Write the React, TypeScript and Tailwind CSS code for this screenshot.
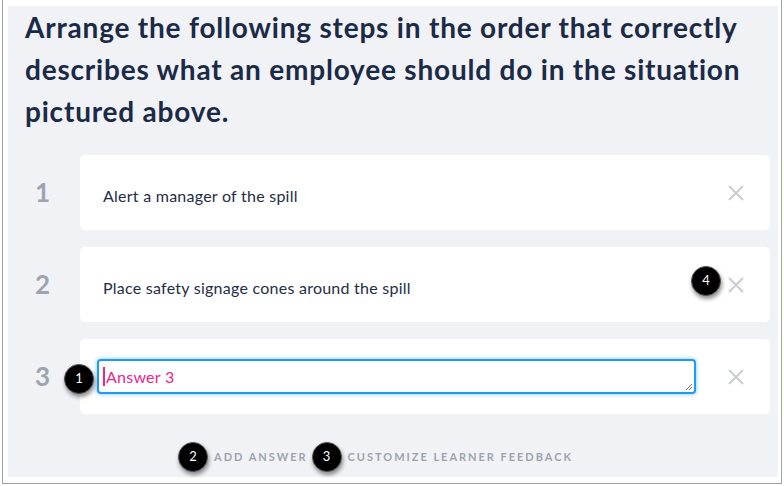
const steps = [
  { n: 1, text: 'Alert a manager of the spill' },
  { n: 2, text: 'Place safety signage cones around the spill' },
];

function Badge({ n, className }: { n: number; className: string }) {
  return (
    <div
      className={`absolute w-[30px] h-[30px] rounded-full bg-black border border-[#555] text-white text-[13px] tracking-normal font-normal flex items-center justify-center shadow-[1px_3px_4px_rgba(0,0,0,0.45)] ${className}`}
    >
      {n}
    </div>
  );
}

function Close() {
  return (
    <svg width="16" height="16" viewBox="0 0 16 16" className="shrink-0">
      <path d="M1 1 L15 15 M15 1 L1 15" stroke="#c9cdd3" strokeWidth="2" />
    </svg>
  );
}

export default function App() {
  return (
    <div className="w-[784px] h-[486px] bg-white font-['Lato',sans-serif]">
      <div className="ml-[2px] w-[780px] h-[484px] border-l border-r border-b border-[#a3a3a3] pt-[6px] pl-[5px] pr-[3px] pb-[6px]">
        <div className="h-full bg-[#f0f2f6] pl-[17px] pr-[8px]">
          <h1 className="text-[28px] leading-[42px] font-bold tracking-[0.8px] text-[#1b2a47] pr-[4px]">
            Arrange the following steps in the order that correctly describes what an employee should do in the situation pictured above.
          </h1>

          <div className="mt-[23px] flex flex-col gap-[17px]">
            {steps.map((s) => (
              <div key={s.n} className="flex items-center">
                <div className="w-[55px] pl-[10px] text-[26px] font-bold text-[#9ca4af]">{s.n}</div>
                <div className="relative flex-1 h-[75px] bg-white rounded-[5px] flex items-center pl-[23px] pr-[26px]">
                  <span className="flex-1 pt-[7px] text-[16px] tracking-[0.25px] text-[#1f2d48]">{s.text}</span>
                  <Close />
                  {s.n === 2 && <Badge n={4} className="left-[611px] top-[19px]" />}
                </div>
              </div>
            ))}

            <div className="flex items-center">
              <div className="w-[55px] pl-[10px] text-[26px] font-bold text-[#9ca4af]">3</div>
              <div className="relative flex-1 h-[75px] bg-white rounded-[5px] flex items-center pl-[17px] pr-[26px]">
                <div className="relative flex-1 h-[35px] mr-[32px] border-2 border-[#1e9bf3] rounded-[4px] bg-white shadow-[0_0_4px_rgba(30,155,243,0.6)] flex items-center pl-[4px]">
                  <span className="w-[2px] h-[19px] bg-[#ec2490] mr-[1px]" />
                  <span className="text-[16px] tracking-[0.25px] text-[#ec2490]">Answer 3</span>
                  <svg className="absolute right-[2px] bottom-[2px]" width="7" height="7" viewBox="0 0 7 7">
                    <path d="M1 7 L7 1 M4 7 L7 4" stroke="#777" strokeWidth="1" />
                  </svg>
                </div>
                <Close />
                <Badge n={1} className="left-[-16px] top-[25px]" />
              </div>
            </div>
          </div>

          <div className="mt-[35px] pr-[8px] flex justify-center gap-[40px] text-[11px] font-bold tracking-[0.18em] text-[#9ca4af]">
            <span className="relative">
              ADD ANSWER
              <Badge n={2} className="left-[-36px] top-[-7px]" />
            </span>
            <span className="relative">
              CUSTOMIZE LEARNER FEEDBACK
              <Badge n={3} className="left-[-36px] top-[-7px]" />
            </span>
          </div>
        </div>
      </div>
    </div>
  );
}
